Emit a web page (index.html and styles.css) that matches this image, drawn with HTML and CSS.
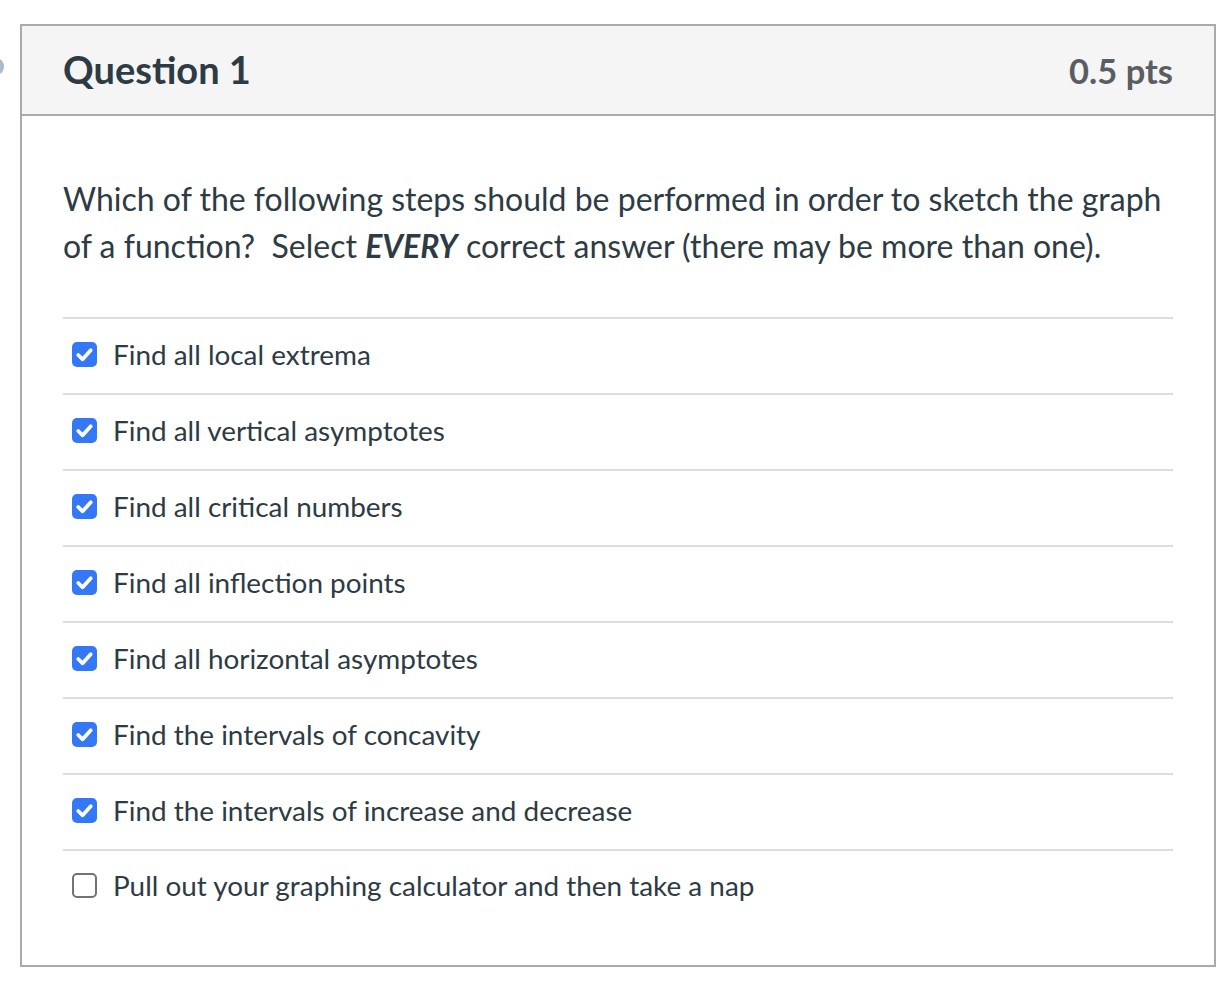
FILE: index.html
```html
<!DOCTYPE html>
<html>
<head>
<meta charset="utf-8">
<link rel="stylesheet" href="styles.css">
</head>
<body>
<div class="page">
  <span class="edge-dot"></span>
  <div class="card">
    <div class="header">
      <span class="title">Question 1</span>
      <span class="pts">0.5 pts</span>
    </div>
    <div class="body">
      <p class="question">Which of the following steps should be performed in order to sketch the graph of a function?&nbsp; Select <strong><em>EVERY</em></strong> correct answer (there may be more than one).</p>
      <ul class="answers">
        <li class="answer"><span class="box checked"><svg viewBox="0 0 24 24" width="25" height="25"><path d="M6 12.5 L10.2 16.6 L18 8" fill="none" stroke="#fff" stroke-width="3.6" stroke-linecap="round" stroke-linejoin="round"/></svg></span><span class="label">Find all local extrema</span></li>
        <li class="answer"><span class="box checked"><svg viewBox="0 0 24 24" width="25" height="25"><path d="M6 12.5 L10.2 16.6 L18 8" fill="none" stroke="#fff" stroke-width="3.6" stroke-linecap="round" stroke-linejoin="round"/></svg></span><span class="label">Find all vertical asymptotes</span></li>
        <li class="answer"><span class="box checked"><svg viewBox="0 0 24 24" width="25" height="25"><path d="M6 12.5 L10.2 16.6 L18 8" fill="none" stroke="#fff" stroke-width="3.6" stroke-linecap="round" stroke-linejoin="round"/></svg></span><span class="label">Find all critical numbers</span></li>
        <li class="answer"><span class="box checked"><svg viewBox="0 0 24 24" width="25" height="25"><path d="M6 12.5 L10.2 16.6 L18 8" fill="none" stroke="#fff" stroke-width="3.6" stroke-linecap="round" stroke-linejoin="round"/></svg></span><span class="label">Find all inflection points</span></li>
        <li class="answer"><span class="box checked"><svg viewBox="0 0 24 24" width="25" height="25"><path d="M6 12.5 L10.2 16.6 L18 8" fill="none" stroke="#fff" stroke-width="3.6" stroke-linecap="round" stroke-linejoin="round"/></svg></span><span class="label">Find all horizontal asymptotes</span></li>
        <li class="answer"><span class="box checked"><svg viewBox="0 0 24 24" width="25" height="25"><path d="M6 12.5 L10.2 16.6 L18 8" fill="none" stroke="#fff" stroke-width="3.6" stroke-linecap="round" stroke-linejoin="round"/></svg></span><span class="label">Find the intervals of concavity</span></li>
        <li class="answer"><span class="box checked"><svg viewBox="0 0 24 24" width="25" height="25"><path d="M6 12.5 L10.2 16.6 L18 8" fill="none" stroke="#fff" stroke-width="3.6" stroke-linecap="round" stroke-linejoin="round"/></svg></span><span class="label">Find the intervals of increase and decrease</span></li>
        <li class="answer"><span class="box"></span><span class="label">Pull out your graphing calculator and then take a nap</span></li>
      </ul>
    </div>
  </div>
</div>
</body>
</html>
```

FILE: styles.css
```css
html, body {
  margin: 0;
  padding: 0;
  background: #fff;
}
body {
  font-family: Lato, "Open Sans", sans-serif;
  color: #2d3b45;
}
.page {
  position: relative;
  padding: 24px 16px 16px 20px;
  width: 1196px;
}
.edge-dot {
  position: absolute;
  left: -7px;
  top: 59px;
  width: 11px;
  height: 15px;
  border-radius: 50%;
  background: #a9bccb;
}
.card {
  border: 2px solid #aaaaaa;
  background: #fff;
}
.header {
  height: 88px;
  background: #f5f5f5;
  border-bottom: 2px solid #aaaaaa;
  display: flex;
  align-items: center;
  justify-content: space-between;
  padding: 0 41px;
}
.title {
  font-size: 38px;
  font-weight: 700;
  color: #2d3b45;
  margin-top: -3px;
}
.pts {
  font-size: 34.5px;
  font-weight: 700;
  color: #5a5e62;
  margin-top: 0;
}
.body {
  padding: 59px 41px 42px 41px;
}
.question {
  margin: 0 0 48px 0;
  font-size: 32px;
  line-height: 47px;
}
.question strong {
  font-weight: 700;
}
.answers {
  list-style: none;
  margin: 0;
  padding: 0;
}
.answer {
  display: flex;
  align-items: center;
  gap: 16px;
  height: 74px;
  border-top: 2px solid #dddddd;
  padding-left: 9px;
}
.answer:last-child {
  height: 72px;
}
.box {
  width: 25px;
  height: 25px;
  box-sizing: border-box;
  border-radius: 5px;
  border: 2px solid #707478;
  background: #fff;
  display: inline-flex;
  flex-shrink: 0;
  margin-top: -4px;
}
.box.checked {
  border: none;
  background: #3478f6;
}
.box svg {
  display: block;
}
.label {
  font-size: 27.9px;
  line-height: 32px;
  margin-top: -4px;
}
```
